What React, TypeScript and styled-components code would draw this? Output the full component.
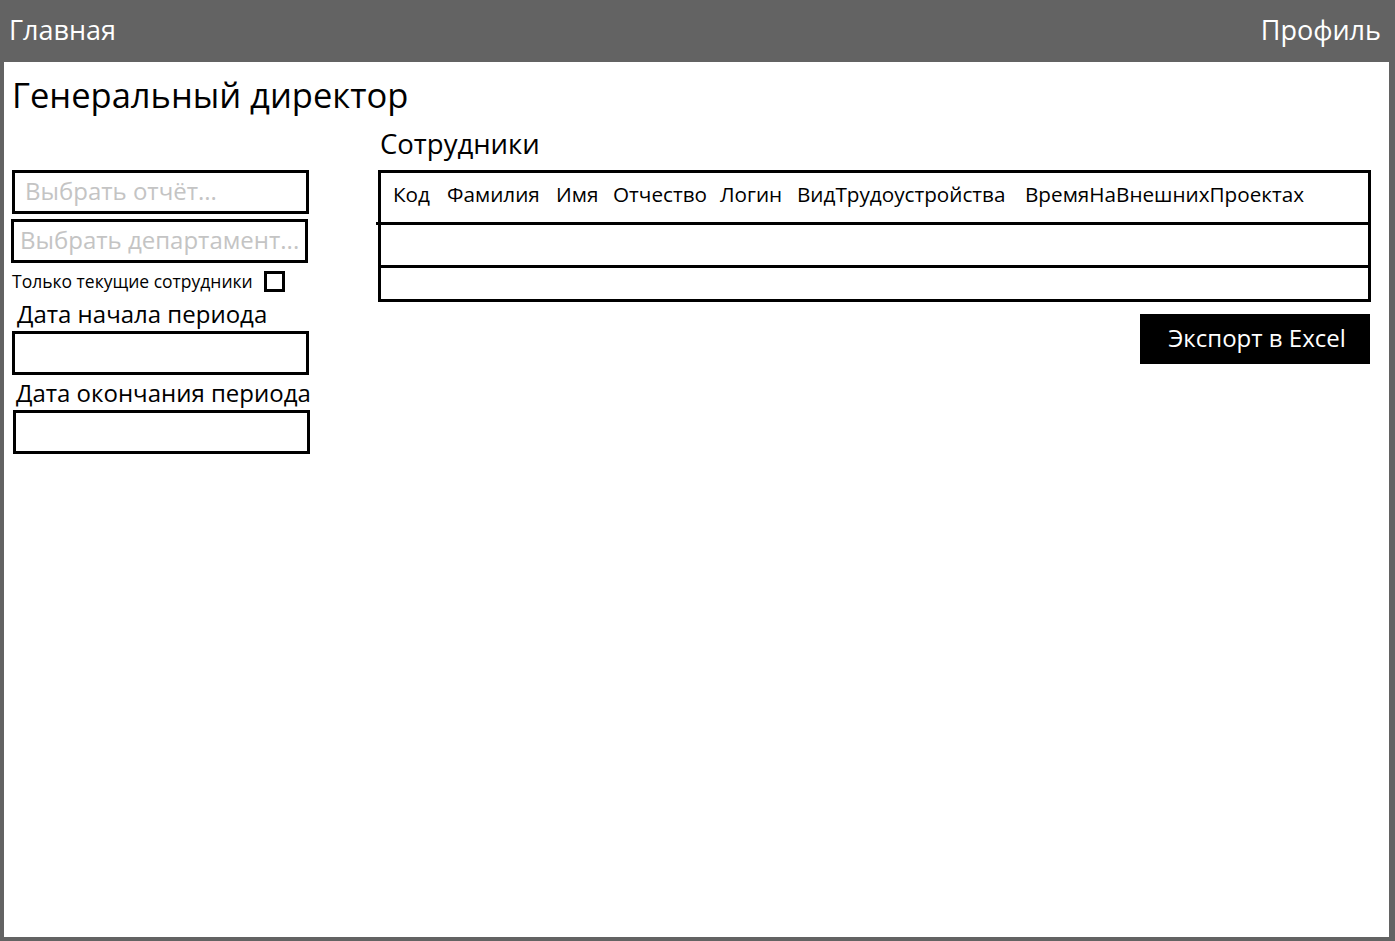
import React from "react";
import styled, { createGlobalStyle } from "styled-components";

const Global = createGlobalStyle`
  html, body { margin: 0; padding: 0; background: #636363; }
  body { font-family: "Open Sans", "Noto Sans", sans-serif; }
  * { box-sizing: border-box; }
`;

const Page = styled.div`
  width: 1395px;
  height: 941px;
  background: #636363;
  display: flex;
  flex-direction: column;
`;

const TopBar = styled.header`
  height: 62px;
  display: flex;
  align-items: center;
  justify-content: space-between;
  padding: 0 14px 3px 9px;
  color: #ffffff;
  font-size: 27px;
`;

const NavLink = styled.span`
  line-height: 1;
`;

const Main = styled.main`
  flex: 1;
  margin: 0 6px 4px 4px;
  background: #ffffff;
  padding: 11px 0 0 7px;
  color: #000;
`;

const Title = styled.h1`
  margin: 0 0 0 1px;
  font-weight: 400;
  font-size: 34.5px;
  line-height: 44px;
`;

const Columns = styled.div`
  display: flex;
  align-items: flex-start;
`;

const Sidebar = styled.aside`
  width: 300px;
  padding-top: 53px;
  display: flex;
  flex-direction: column;
`;

const Field = styled.input<{ $pad?: number; $shift?: number; $top?: number }>`
  width: 297px;
  height: 44px;
  border: 3px solid #000;
  border-radius: 0;
  padding: 0 0 3px ${(p) => p.$pad ?? 10}px;
  margin: ${(p) => p.$top ?? 0}px 0 0 ${(p) => p.$shift ?? 1}px;
  font-family: inherit;
  font-size: 24px;
  color: #000;
  outline: none;
  background: #fff;
  &::placeholder { color: #c4c4c4; }
`;

const CheckRow = styled.label`
  display: flex;
  align-items: center;
  margin: 7px 0 0 1px;
  font-size: 17.5px;
  height: 22px;
`;

const Box = styled.span`
  width: 21px;
  height: 21px;
  border: 3px solid #000;
  margin-left: 11px;
  flex-shrink: 0;
`;

const FieldLabel = styled.div<{ $shift?: number; $top?: number }>`
  font-size: 24px;
  line-height: 30px;
  margin: ${(p) => p.$top ?? 5}px 0 2px ${(p) => p.$shift ?? 6}px;
  white-space: nowrap;
`;

const Content = styled.section`
  margin-left: 67px;
  width: 993px;
  display: flex;
  flex-direction: column;
`;

const SectionTitle = styled.h2`
  margin: 0 0 0 2px;
  font-weight: 400;
  font-size: 27.5px;
  line-height: 36px;
  height: 53px;
  padding-top: 9px;
`;

const Table = styled.div`
  border: 3px solid #000;
  display: flex;
  flex-direction: column;
`;

const cols = "12px 54px 109px 57px 107px 77px 228px 1fr";

const HeadRow = styled.div`
  display: grid;
  grid-template-columns: ${cols};
  height: 52px;
  align-items: center;
  font-size: 20.7px;
  padding-bottom: 7px;
  border-bottom: 3px solid #000;
  position: relative;
  &::after {
    content: "";
    position: absolute;
    left: -5px;
    bottom: -3px;
    width: 3px;
    height: 3px;
    background: #000;
  }
`;

const Cell = styled.span`
  white-space: nowrap;
`;

const BodyRow = styled.div<{ $h: number; $last?: boolean }>`
  height: ${(p) => p.$h}px;
  border-bottom: ${(p) => (p.$last ? "none" : "3px solid #000")};
`;

const Actions = styled.div`
  display: flex;
  justify-content: flex-end;
  margin-top: 12px;
  padding-right: 1px;
`;

const ExportButton = styled.button`
  width: 230px;
  height: 50px;
  background: #000;
  color: #fff;
  border: none;
  border-radius: 0;
  font-family: inherit;
  font-size: 24px;
  padding: 0 0 4px 4px;
`;

const headers = [
  "",
  "Код",
  "Фамилия",
  "Имя",
  "Отчество",
  "Логин",
  "ВидТрудоустройства",
  "ВремяНаВнешнихПроектах",
];

export default function App() {
  return (
    <>
      <Global />
      <Page>
        <TopBar>
          <NavLink>Главная</NavLink>
          <NavLink>Профиль</NavLink>
        </TopBar>
        <Main>
          <Title>Генеральный директор</Title>
          <Columns>
            <Sidebar>
              <Field placeholder="Выбрать отчёт..." $pad={10} $shift={1} />
              <Field placeholder="Выбрать департамент..." $pad={6} $shift={0} $top={5} />
              <CheckRow>
                Только текущие сотрудники
                <Box />
              </CheckRow>
              <FieldLabel $shift={6} $top={7}>Дата начала периода</FieldLabel>
              <Field $shift={1} />
              <FieldLabel $shift={5} $top={3}>Дата окончания периода</FieldLabel>
              <Field $shift={2} />
            </Sidebar>
            <Content>
              <SectionTitle>Сотрудники</SectionTitle>
              <Table>
                <HeadRow>
                  {headers.map((h, i) => (
                    <Cell key={i}>{h}</Cell>
                  ))}
                </HeadRow>
                <BodyRow $h={43} />
                <BodyRow $h={31} $last />
              </Table>
              <Actions>
                <ExportButton>Экспорт в Excel</ExportButton>
              </Actions>
            </Content>
          </Columns>
        </Main>
      </Page>
    </>
  );
}
